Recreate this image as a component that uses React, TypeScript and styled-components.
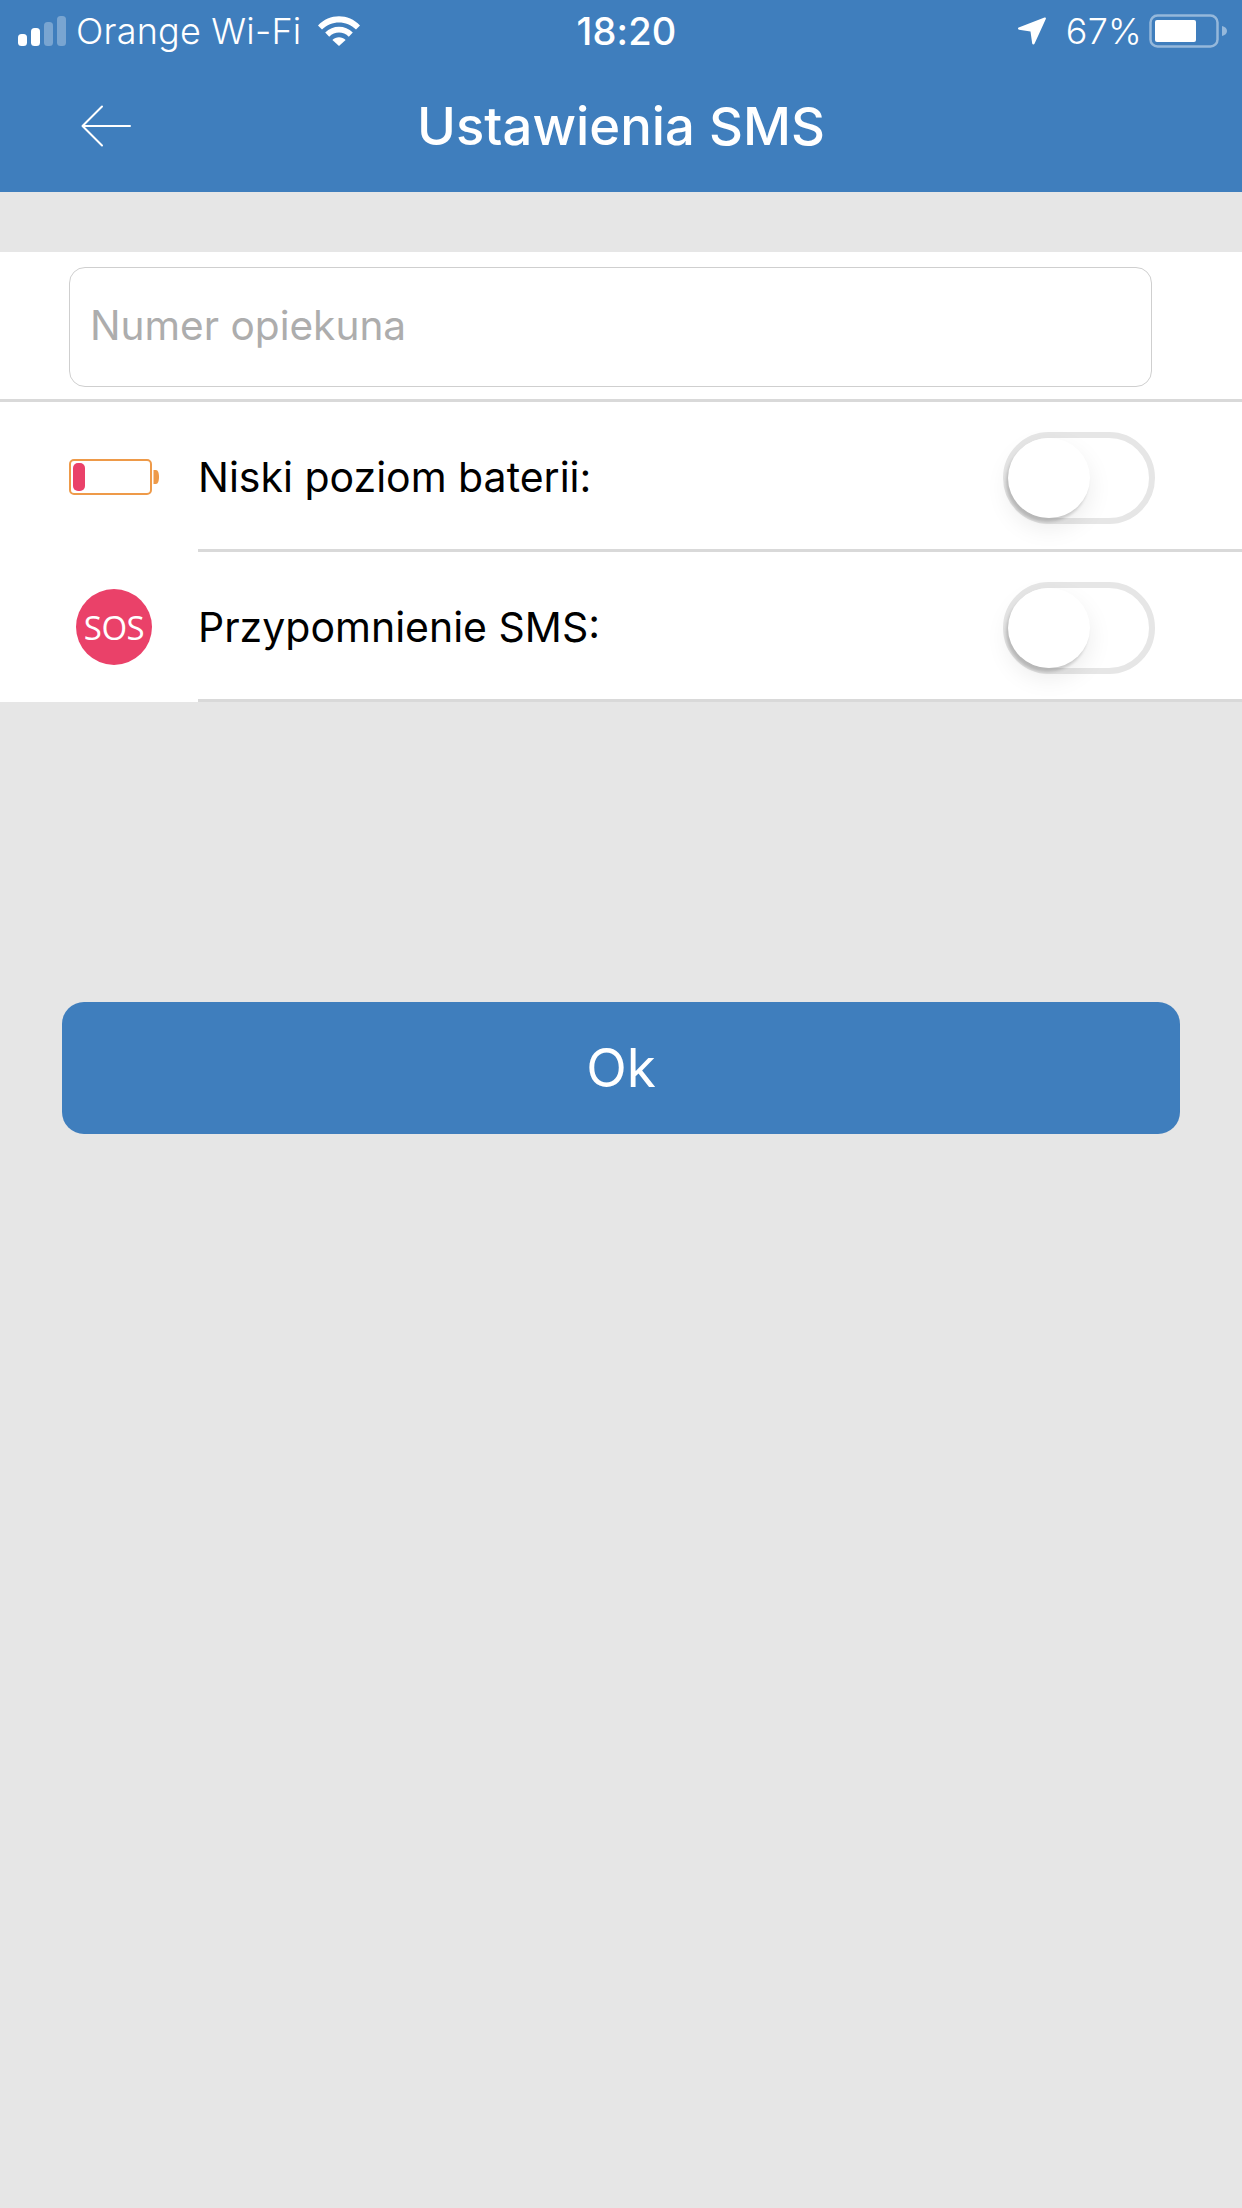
import React from "react";
import styled, { createGlobalStyle } from "styled-components";

const Global = createGlobalStyle`
  html, body { margin: 0; padding: 0; background: #e5e5e5; }
  * { box-sizing: border-box; }
  body { font-family: Inter, "Noto Sans", "Liberation Sans", sans-serif; }
`;

const Page = styled.div`
  width: 1242px;
  height: 2208px;
  background: #e6e6e6;
  display: flex;
  flex-direction: column;
  overflow: hidden;
`;

const Header = styled.header`
  height: 192px;
  background: #3f7ebd;
  color: #fff;
  display: flex;
  flex-direction: column;
`;

const StatusBar = styled.div`
  height: 62px;
  display: grid;
  grid-template-columns: 1fr auto 1fr;
  align-items: center;
  padding: 0 15px 0 18px;
  font-size: 36px;
  letter-spacing: 0.2px;
`;

const StatusLeft = styled.div`
  display: flex;
  align-items: center;
`;

const StatusRight = styled.div`
  display: flex;
  align-items: center;
  justify-content: flex-end;
`;

const Carrier = styled.span`
  margin-left: 10px;
  margin-right: 17px;
  font-weight: 300;
`;

const Clock = styled.span`
  font-size: 38px;
  font-weight: 500;
  margin-left: 8px;
`;

const Percent = styled.span`
  margin: 0 7px 0 20px;
  font-weight: 300;
`;

const NavBar = styled.div`
  flex: 1;
  display: grid;
  grid-template-columns: 1fr auto 1fr;
  align-items: center;
  padding-bottom: 2px;
`;

const BackCell = styled.div`
  display: flex;
  padding-left: 81px;
`;

const Title = styled.h1`
  margin: 0;
  font-size: 52.6px;
  font-weight: 500;
  line-height: 1;
`;

const Content = styled.section`
  margin-top: 60px;
  background: #fff;
  display: flex;
  flex-direction: column;
`;

const InputRow = styled.div`
  padding: 15px 90px 12px 69px;
  border-bottom: 3px solid #d9d9d9;
`;

const NumberInput = styled.input`
  display: block;
  width: 100%;
  height: 120px;
  border: 1px solid #cfcfcf;
  border-radius: 16px;
  background: #fff;
  padding: 0 20px 4px;
  font-family: inherit;
  font-size: 40.6px;
  color: #000;
  outline: none;
  &::placeholder {
    color: #adadad;
    opacity: 1;
  }
`;

const Row = styled.div`
  display: flex;
  height: 150px;
`;

const IconCell = styled.div`
  width: 198px;
  padding-left: 69px;
  display: flex;
  align-items: center;
`;

const RowBody = styled.div`
  flex: 1;
  display: flex;
  align-items: center;
  justify-content: space-between;
  padding: 3px 87px 0 0;
  border-bottom: 3px solid #d9d9d9;
`;

const Label = styled.span`
  font-size: 41px;
  color: #000;
`;

const Toggle = styled.div`
  position: relative;
  width: 152px;
  height: 92px;
  margin-top: 2px;
  border: 6px solid #e6e6e6;
  border-radius: 46px;
  background: #fff;
`;

const Knob = styled.div`
  position: absolute;
  left: -1px;
  top: 0;
  width: 82px;
  height: 80px;
  border-radius: 50%;
  background: #fff;
  box-shadow: -2px 4px 3px rgba(0, 0, 0, 0.16), 0 10px 24px rgba(0, 0, 0, 0.08);
`;

const SosBadge = styled.div`
  width: 76px;
  height: 76px;
  margin-left: 7px;
  border-radius: 50%;
  background: #ea4169;
  color: #fff;
  display: flex;
  align-items: center;
  justify-content: center;
  font-size: 33px;
  font-family: "Open Sans", "Noto Sans", sans-serif;
  letter-spacing: -0.5px;
`;

const Action = styled.div`
  padding: 300px 62px 0;
`;

const OkButton = styled.button`
  display: block;
  width: 100%;
  height: 132px;
  border: none;
  border-radius: 22px;
  background: #3f7ebd;
  color: #fff;
  font-family: inherit;
  font-size: 53px;
  font-weight: 400;
`;

const SignalIcon = () => (
  <svg width="48" height="30" viewBox="0 0 48 30">
    <rect x="0" y="18" width="9" height="12" rx="3.5" fill="#fff" />
    <rect x="13" y="12" width="9" height="18" rx="3.5" fill="#fff" />
    <rect x="26" y="6" width="9" height="24" rx="3.5" fill="#fff" fillOpacity="0.3" />
    <rect x="39" y="0" width="9" height="30" rx="3.5" fill="#fff" fillOpacity="0.3" />
  </svg>
);

const WifiIcon = () => (
  <svg width="42" height="30" viewBox="0 0 42 30">
    <path d="M0 9.5C11.5 -2.8 30.5 -2.8 42 9.5L38 13.6C28.6 4 13.4 4 4 13.6Z" fill="#fff" />
    <path d="M7.2 16.6C14.8 8.8 27.2 8.8 34.8 16.6L30.8 20.8C25.3 15.2 16.7 15.2 11.2 20.8Z" fill="#fff" />
    <path d="M14.4 24C18 20.4 24 20.4 27.6 24L21 30Z" fill="#fff" />
  </svg>
);

const LocationIcon = () => (
  <svg width="28" height="28" viewBox="0 0 28 28">
    <path d="M26.5 0.5C27.5 0.2 28.2 1 27.8 2L16.5 26.8C16 27.9 14.4 27.7 14.2 26.5L12.5 14.6L1 12.8C-0.2 12.6-0.4 11 0.7 10.5Z" fill="#fff" />
  </svg>
);

const StatusBattery = () => (
  <svg width="78" height="34" viewBox="0 0 78 34">
    <rect x="1.5" y="1.5" width="67" height="31" rx="7" fill="none" stroke="#fff" strokeOpacity="0.45" strokeWidth="2.5" />
    <rect x="6" y="6" width="41" height="22" rx="2" fill="#fff" />
    <path d="M73 12C76 12.5 78 14.5 78 17C78 19.5 76 21.5 73 22Z" fill="#fff" fillOpacity="0.45" />
  </svg>
);

const BackArrow = () => (
  <svg width="50" height="42" viewBox="0 0 50 42">
    <path d="M49 21H2M21 1.5L1.5 21L21 40.5" fill="none" stroke="#fff" strokeWidth="2" strokeLinecap="round" strokeLinejoin="round" />
  </svg>
);

const LowBattery = () => (
  <svg width="90" height="36" viewBox="0 0 90 36">
    <rect x="1" y="1" width="81" height="34" rx="4" fill="#fff" stroke="#ee9a49" strokeWidth="2" />
    <rect x="4" y="4" width="12" height="28" rx="5" fill="#ea4169" />
    <path d="M84.500 11H87C89 11 90 14 90 18C90 22 89 25 87 25H84.500Z" fill="#ee9a49" />
  </svg>
);

const SwitchControl = () => (
  <Toggle>
    <Knob />
  </Toggle>
);

export default function App() {
  return (
    <Page>
      <Global />
      <Header>
        <StatusBar>
          <StatusLeft>
            <SignalIcon />
            <Carrier>Orange Wi-Fi</Carrier>
            <WifiIcon />
          </StatusLeft>
          <Clock>18:20</Clock>
          <StatusRight>
            <LocationIcon />
            <Percent>67%</Percent>
            <StatusBattery />
          </StatusRight>
        </StatusBar>
        <NavBar>
          <BackCell>
            <BackArrow />
          </BackCell>
          <Title>Ustawienia SMS</Title>
        </NavBar>
      </Header>
      <Content>
        <InputRow>
          <NumberInput placeholder="Numer opiekuna" />
        </InputRow>
        <Row>
          <IconCell>
            <LowBattery />
          </IconCell>
          <RowBody>
            <Label>Niski poziom baterii:</Label>
            <SwitchControl />
          </RowBody>
        </Row>
        <Row>
          <IconCell>
            <SosBadge>SOS</SosBadge>
          </IconCell>
          <RowBody>
            <Label>Przypomnienie SMS:</Label>
            <SwitchControl />
          </RowBody>
        </Row>
      </Content>
      <Action>
        <OkButton>Ok</OkButton>
      </Action>
    </Page>
  );
}
